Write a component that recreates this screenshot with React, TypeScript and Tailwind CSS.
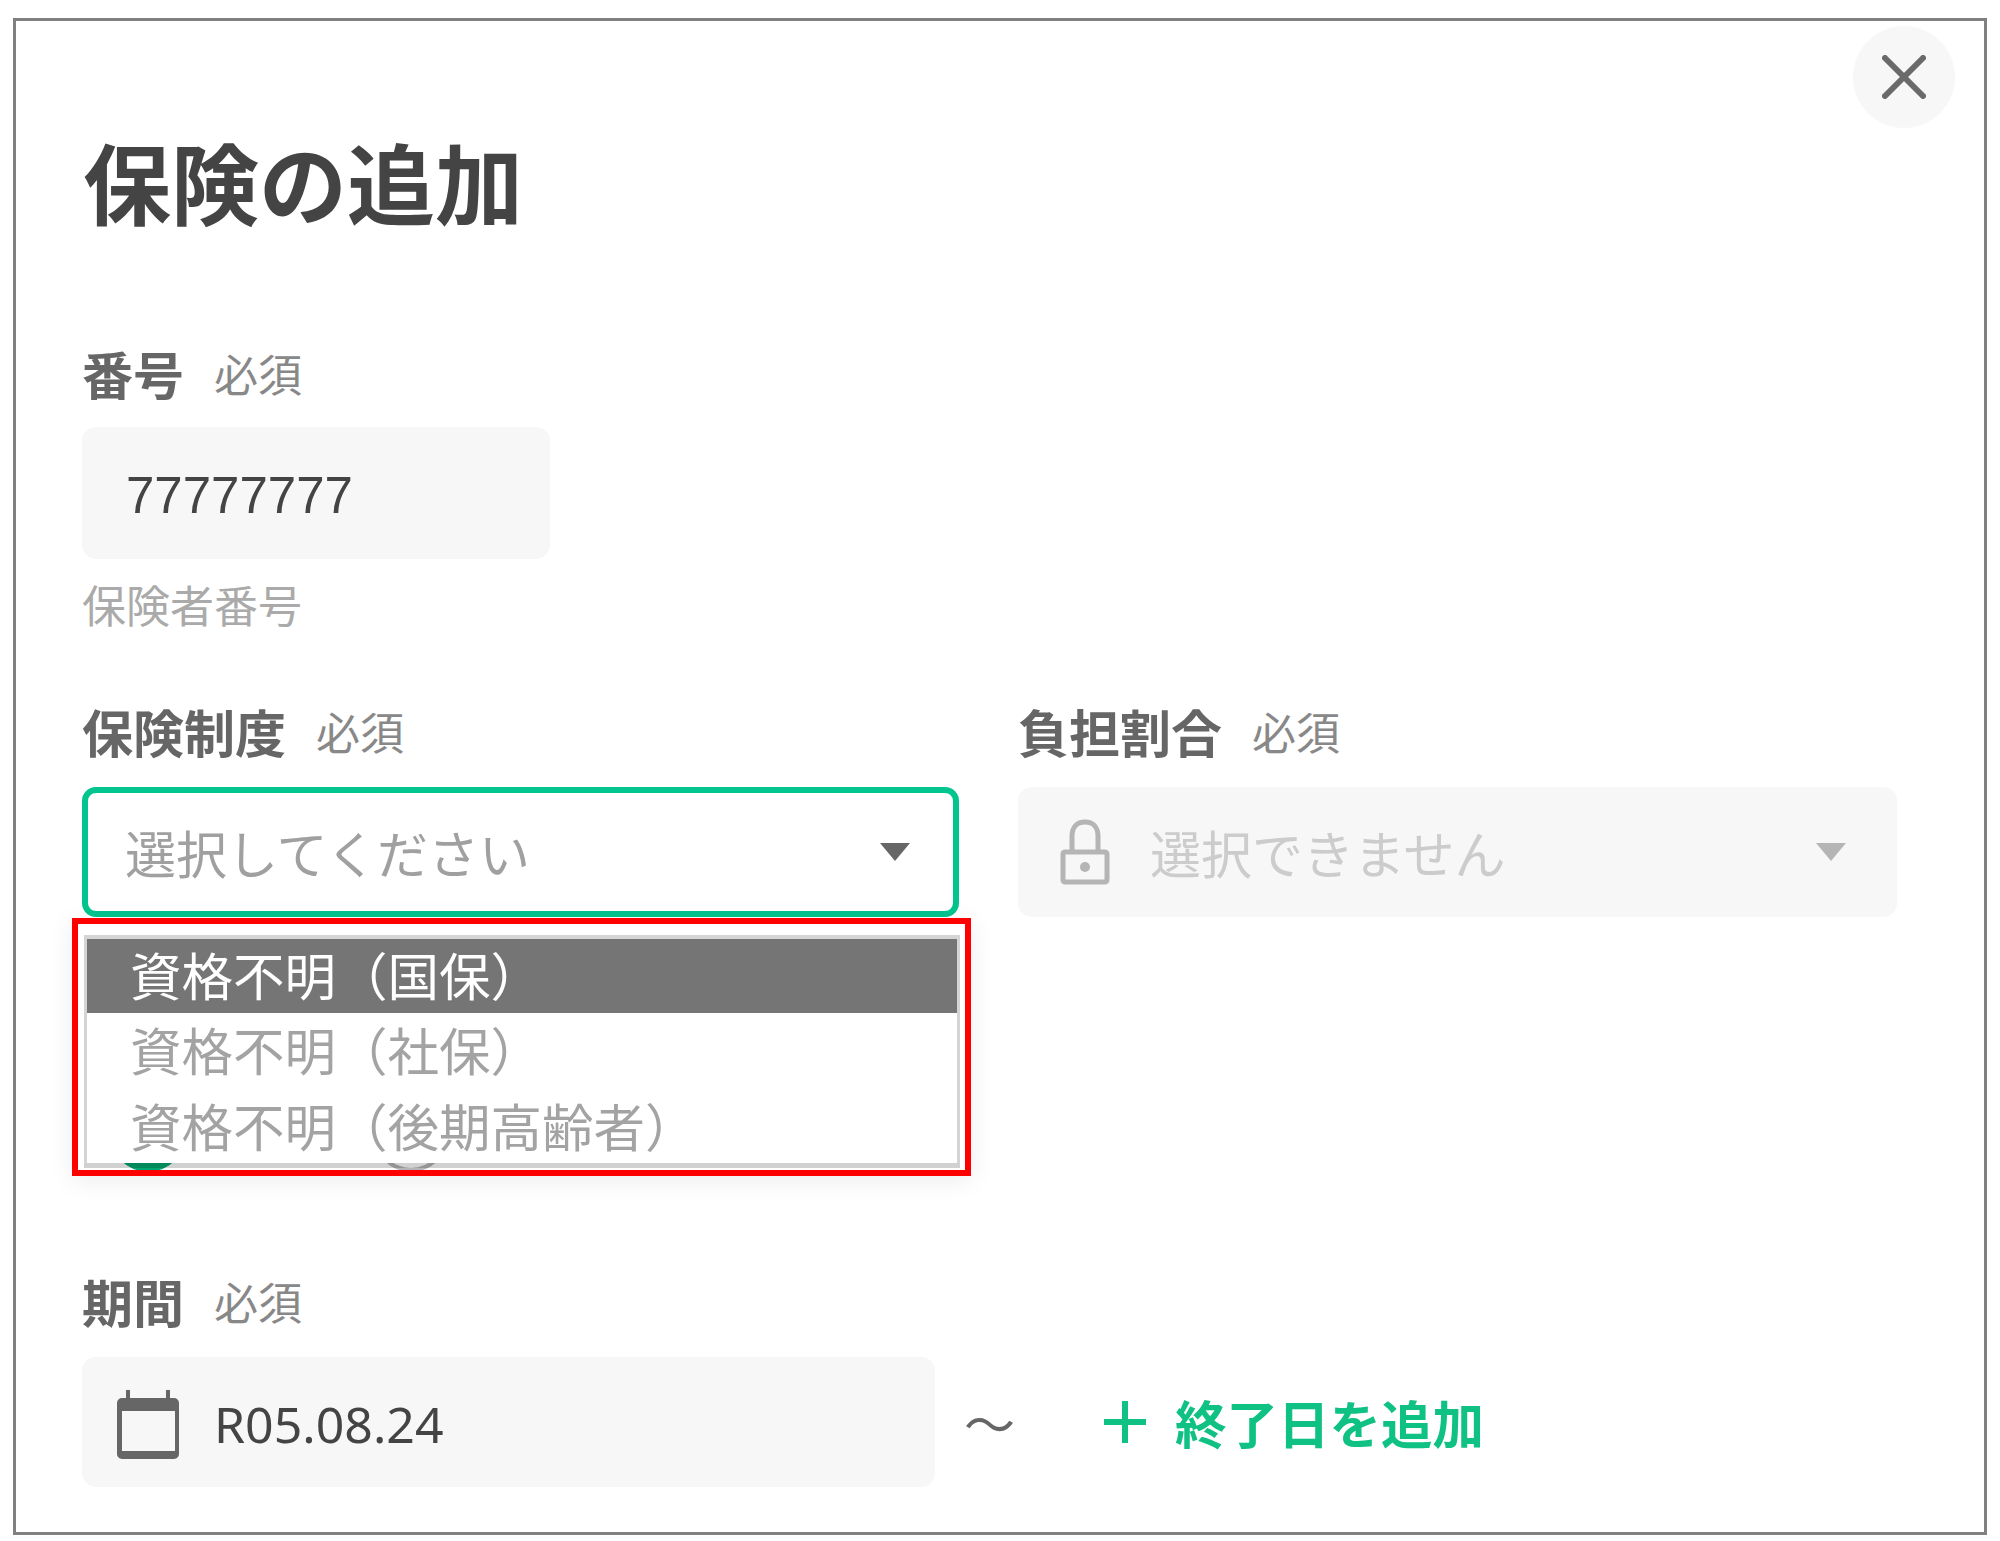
import { ReactNode } from "react";

const font = "font-['Noto_Sans_CJK_JP','Noto_Sans',sans-serif]";

function Label({ title, note }: { title: string; note: string }) {
  return (
    <div className="flex h-[56px] items-center gap-[30px] pb-[5px]">
      <span className="text-[51px] font-bold leading-[48px] text-[#666666]">{title}</span>
      <span className="text-[44px] leading-[48px] text-[#888888]">{note}</span>
    </div>
  );
}

function Arrow({ color }: { color: string }) {
  return (
    <svg width="32" height="20" viewBox="0 0 32 20" className="shrink-0">
      <path d="M1 1h30L16 19z" fill={color} />
    </svg>
  );
}

function LockIcon() {
  return (
    <svg width="50" height="66" viewBox="0 0 50 66" className="shrink-0">
      <path d="M12 34V17C12 8 17 3 25 3s13 5 13 14v17" fill="none" stroke="#b5b5b5" strokeWidth="5" />
      <rect x="3" y="33" width="44" height="30" rx="2" fill="none" stroke="#b5b5b5" strokeWidth="5" />
      <circle cx="25" cy="48" r="5" fill="#b5b5b5" />
    </svg>
  );
}

function CalendarIcon() {
  return (
    <svg width="62" height="70" viewBox="0 0 62 70" className="mt-[4px] shrink-0">
      <path d="M9 1h4v9H9zM49 1h4v9h-4z" fill="#666666" />
      <path
        d="M5 9h52a5 5 0 0 1 5 5v51a5 5 0 0 1-5 5H5a5 5 0 0 1-5-5V14a5 5 0 0 1 5-5zm-0 13v40h53V22z"
        fill="#666666"
        fillRule="evenodd"
      />
    </svg>
  );
}

function Box({ children, className }: { children: ReactNode; className: string }) {
  return <div className={`flex h-[130px] items-center rounded-[14px] ${className}`}>{children}</div>;
}

function Menu() {
  return (
    <div className="absolute left-[-10px] top-[131px] z-10 h-[258px] w-[899px] border-[6px] border-[#ff0000] pl-[6px] pt-[11px] shadow-[0_4px_24px_rgba(0,0,0,0.08)]">
      <div className="h-[228px] w-[876px] border-x-[3px] border-t-[4px] border-[#d4d4d4] bg-white shadow-[0_5px_0_rgba(0,0,0,0.18)]">
        <div className="flex h-[74px] items-center bg-[#757575] pb-[4px] pl-[43px] text-[51.5px] leading-none text-white">
          資格不明（国保）
        </div>
        <div className="flex h-[76px] items-center pb-[4px] pl-[43px] text-[51.5px] leading-none text-[#a3a3a3]">
          資格不明（社保）
        </div>
        <div className="flex h-[74px] items-center pb-[2px] pl-[43px] text-[51.5px] leading-none text-[#a3a3a3]">
          資格不明（後期高齢者）
        </div>
      </div>
    </div>
  );
}

export default function App() {
  return (
    <div className={`h-[1541px] w-[2000px] overflow-hidden bg-white px-[13px] pt-[18px] ${font}`}>
      <div className="relative h-[1517px] w-[1974px] border-[3px] border-[#808080] pl-[66px] pr-[87px] pt-[114px]">
        <button className="absolute right-[29px] top-[5px] flex h-[102px] w-[102px] items-center justify-center rounded-full bg-[#f7f7f7]">
          <svg width="44" height="44" viewBox="0 0 44 44">
            <path d="M3 3l38 38M41 3L3 41" stroke="#6a6a6a" strokeWidth="6" strokeLinecap="round" />
          </svg>
        </button>

        <h1 className="h-[90px] pl-[1px] text-[88px] font-bold leading-[90px] text-[#444444]">保険の追加</h1>

        <div className="mt-[122px]">
          <Label title="番号" note="必須" />
          <div className="mt-[24px] flex h-[132px] w-[468px] items-center rounded-[14px] bg-[#f7f7f7] pl-[44px] pt-[6px] font-['Liberation_Sans',sans-serif] text-[51px] text-[#444444]">
            77777777
          </div>
          <div className="mt-[17px] h-[56px] text-[44px] leading-[56px] text-[#aaaaaa]">保険者番号</div>
        </div>

        <div className="mt-[73px] grid grid-cols-[877px_879px] gap-x-[59px]">
          <div className="relative">
            <Label title="保険制度" note="必須" />
            <div className="relative mt-[26px]">
              <Box className="justify-between border-[6px] border-[#00c58e] bg-white pl-[37px] pr-[42px]">
                <span className="text-[51px] text-[#a0a0a0]">選択してください</span>
                <Arrow color="#666666" />
              </Box>
              <Menu />
            </div>
          </div>
          <div>
            <Label title="負担割合" note="必須" />
            <div className="mt-[26px]">
              <Box className="bg-[#f7f7f7] pl-[42px] pr-[50px]">
                <LockIcon />
                <span className="ml-[40px] flex-1 text-[51px] text-[#cccccc]">選択できません</span>
                <Arrow color="#b5b5b5" />
              </Box>
            </div>
          </div>
        </div>

        <div className="mt-[179px] flex h-[76px] pl-[28px]">
          <span className="h-[76px] w-[76px] rounded-full bg-[#00a870]" />
          <span className="ml-[187px] h-[76px] w-[76px] rounded-full border-[4px] border-[#b5b5b5] bg-white" />
        </div>

        <div className="mt-[103px]">
          <Label title="期間" note="必須" />
          <div className="mt-[26px] flex items-center">
            <Box className="w-[853px] bg-[#f7f7f7] pl-[35px]">
              <CalendarIcon />
              <span className="ml-[35px] pt-[5px] font-['Noto_Sans',sans-serif] text-[50px] text-[#444444]">R05.08.24</span>
            </Box>
            <span className="ml-[29px] text-[51px] leading-none text-[#666666]">～</span>
            <button className="ml-[88px] flex items-center gap-[28px] text-[51.5px] font-bold leading-none text-[#10c184]">
              <svg width="44" height="44" viewBox="0 0 44 44" className="shrink-0">
                <path d="M22 1v42M1 22h42" stroke="#10c184" strokeWidth="6" />
              </svg>
              終了日を追加
            </button>
          </div>
        </div>
      </div>
    </div>
  );
}
